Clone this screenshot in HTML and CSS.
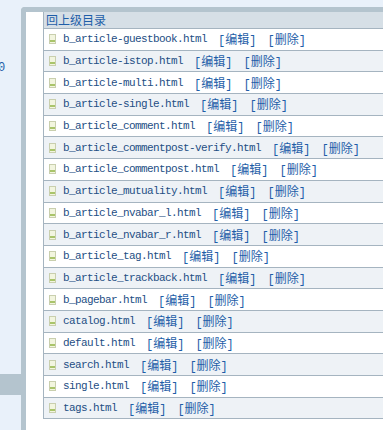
FILE: index.html
```html
<!DOCTYPE html>
<html lang="zh-CN">
<head>
	<meta charset="UTF-8">
	<title>模板文件</title>
	<link rel="stylesheet" href="styles.css">
</head>
<body>
	<div class="page">
		<div class="side">
			<div class="side-link">0</div>
			<div class="side-on"></div>
		</div>
		<div class="frame">
			<div class="list">
				<div class="head"><a href="#">回上级目录</a></div>
				<div class="row"><svg class="ico" width="7" height="10" viewBox="0 0 7 10"><rect x="0.5" y="0.5" width="6" height="9" fill="#f2f5df" stroke="#c9cfae"/><rect x="1" y="6" width="5" height="2" fill="#a9c46a"/></svg><span class="fn">b_article-guestbook.html</span><a href="#">[编辑]</a><a href="#">[删除]</a></div>
				<div class="row"><svg class="ico" width="7" height="10" viewBox="0 0 7 10"><rect x="0.5" y="0.5" width="6" height="9" fill="#f2f5df" stroke="#c9cfae"/><rect x="1" y="6" width="5" height="2" fill="#a9c46a"/></svg><span class="fn">b_article-istop.html</span><a href="#">[编辑]</a><a href="#">[删除]</a></div>
				<div class="row"><svg class="ico" width="7" height="10" viewBox="0 0 7 10"><rect x="0.5" y="0.5" width="6" height="9" fill="#f2f5df" stroke="#c9cfae"/><rect x="1" y="6" width="5" height="2" fill="#a9c46a"/></svg><span class="fn">b_article-multi.html</span><a href="#">[编辑]</a><a href="#">[删除]</a></div>
				<div class="row"><svg class="ico" width="7" height="10" viewBox="0 0 7 10"><rect x="0.5" y="0.5" width="6" height="9" fill="#f2f5df" stroke="#c9cfae"/><rect x="1" y="6" width="5" height="2" fill="#a9c46a"/></svg><span class="fn">b_article-single.html</span><a href="#">[编辑]</a><a href="#">[删除]</a></div>
				<div class="row"><svg class="ico" width="7" height="10" viewBox="0 0 7 10"><rect x="0.5" y="0.5" width="6" height="9" fill="#f2f5df" stroke="#c9cfae"/><rect x="1" y="6" width="5" height="2" fill="#a9c46a"/></svg><span class="fn">b_article_comment.html</span><a href="#">[编辑]</a><a href="#">[删除]</a></div>
				<div class="row"><svg class="ico" width="7" height="10" viewBox="0 0 7 10"><rect x="0.5" y="0.5" width="6" height="9" fill="#f2f5df" stroke="#c9cfae"/><rect x="1" y="6" width="5" height="2" fill="#a9c46a"/></svg><span class="fn">b_article_commentpost-verify.html</span><a href="#">[编辑]</a><a href="#">[删除]</a></div>
				<div class="row"><svg class="ico" width="7" height="10" viewBox="0 0 7 10"><rect x="0.5" y="0.5" width="6" height="9" fill="#f2f5df" stroke="#c9cfae"/><rect x="1" y="6" width="5" height="2" fill="#a9c46a"/></svg><span class="fn">b_article_commentpost.html</span><a href="#">[编辑]</a><a href="#">[删除]</a></div>
				<div class="row"><svg class="ico" width="7" height="10" viewBox="0 0 7 10"><rect x="0.5" y="0.5" width="6" height="9" fill="#f2f5df" stroke="#c9cfae"/><rect x="1" y="6" width="5" height="2" fill="#a9c46a"/></svg><span class="fn">b_article_mutuality.html</span><a href="#">[编辑]</a><a href="#">[删除]</a></div>
				<div class="row"><svg class="ico" width="7" height="10" viewBox="0 0 7 10"><rect x="0.5" y="0.5" width="6" height="9" fill="#f2f5df" stroke="#c9cfae"/><rect x="1" y="6" width="5" height="2" fill="#a9c46a"/></svg><span class="fn">b_article_nvabar_l.html</span><a href="#">[编辑]</a><a href="#">[删除]</a></div>
				<div class="row"><svg class="ico" width="7" height="10" viewBox="0 0 7 10"><rect x="0.5" y="0.5" width="6" height="9" fill="#f2f5df" stroke="#c9cfae"/><rect x="1" y="6" width="5" height="2" fill="#a9c46a"/></svg><span class="fn">b_article_nvabar_r.html</span><a href="#">[编辑]</a><a href="#">[删除]</a></div>
				<div class="row"><svg class="ico" width="7" height="10" viewBox="0 0 7 10"><rect x="0.5" y="0.5" width="6" height="9" fill="#f2f5df" stroke="#c9cfae"/><rect x="1" y="6" width="5" height="2" fill="#a9c46a"/></svg><span class="fn">b_article_tag.html</span><a href="#">[编辑]</a><a href="#">[删除]</a></div>
				<div class="row"><svg class="ico" width="7" height="10" viewBox="0 0 7 10"><rect x="0.5" y="0.5" width="6" height="9" fill="#f2f5df" stroke="#c9cfae"/><rect x="1" y="6" width="5" height="2" fill="#a9c46a"/></svg><span class="fn">b_article_trackback.html</span><a href="#">[编辑]</a><a href="#">[删除]</a></div>
				<div class="row"><svg class="ico" width="7" height="10" viewBox="0 0 7 10"><rect x="0.5" y="0.5" width="6" height="9" fill="#f2f5df" stroke="#c9cfae"/><rect x="1" y="6" width="5" height="2" fill="#a9c46a"/></svg><span class="fn">b_pagebar.html</span><a href="#">[编辑]</a><a href="#">[删除]</a></div>
				<div class="row"><svg class="ico" width="7" height="10" viewBox="0 0 7 10"><rect x="0.5" y="0.5" width="6" height="9" fill="#f2f5df" stroke="#c9cfae"/><rect x="1" y="6" width="5" height="2" fill="#a9c46a"/></svg><span class="fn">catalog.html</span><a href="#">[编辑]</a><a href="#">[删除]</a></div>
				<div class="row"><svg class="ico" width="7" height="10" viewBox="0 0 7 10"><rect x="0.5" y="0.5" width="6" height="9" fill="#f2f5df" stroke="#c9cfae"/><rect x="1" y="6" width="5" height="2" fill="#a9c46a"/></svg><span class="fn">default.html</span><a href="#">[编辑]</a><a href="#">[删除]</a></div>
				<div class="row"><svg class="ico" width="7" height="10" viewBox="0 0 7 10"><rect x="0.5" y="0.5" width="6" height="9" fill="#f2f5df" stroke="#c9cfae"/><rect x="1" y="6" width="5" height="2" fill="#a9c46a"/></svg><span class="fn">search.html</span><a href="#">[编辑]</a><a href="#">[删除]</a></div>
				<div class="row"><svg class="ico" width="7" height="10" viewBox="0 0 7 10"><rect x="0.5" y="0.5" width="6" height="9" fill="#f2f5df" stroke="#c9cfae"/><rect x="1" y="6" width="5" height="2" fill="#a9c46a"/></svg><span class="fn">single.html</span><a href="#">[编辑]</a><a href="#">[删除]</a></div>
				<div class="row"><svg class="ico" width="7" height="10" viewBox="0 0 7 10"><rect x="0.5" y="0.5" width="6" height="9" fill="#f2f5df" stroke="#c9cfae"/><rect x="1" y="6" width="5" height="2" fill="#a9c46a"/></svg><span class="fn">tags.html</span><a href="#">[编辑]</a><a href="#">[删除]</a></div>
			</div>
		</div>
	</div>
</body>
</html>
```
FILE: styles.css
```css
body{
	margin: 0;
	background: #e9f1fa;
	overflow: hidden;
	font-family: "Liberation Mono", "Noto Sans CJK SC", monospace;
}
a{
	color: #1e5ea8;
	text-decoration: none;
}
.page{
	display: flex;
	height: 430px;
}
.side{
	width: 21px;
	flex: none;
	overflow: hidden;
}
.side-link{
	margin-top: 61px;
	height: 14px;
	line-height: 14px;
	font-size: 12px;
	color: #1e5ea8;
	text-indent: -2px;
}
.side-on{
	margin-top: 299px;
	height: 21px;
	background: #b4c4ce;
}
.frame{
	flex: 1;
	min-width: 0;
	margin-top: 7px;
	border-top: 5px solid #b4c4ce;
	border-left: 5px solid #b4c4ce;
	border-top-left-radius: 4px;
	background: #fff;
	padding-left: 17px;
	overflow: hidden;
}
.list{
	width: 380px;
	border-left: 1px solid #a5b4c0;
}
.head{
	height: 16px;
	line-height: 16px;
	padding-left: 2px;
	background: #d6dfe6;
	border-bottom: 1px solid #a5b4c0;
	font-family: "Noto Sans CJK SC", sans-serif;
	font-size: 12px;
}
.row{
	display: flex;
	align-items: center;
	height: 20.7px;
	padding-left: 5px;
	border-bottom: 1px solid #a5b4c0;
	white-space: nowrap;
}
.row:nth-child(odd){
	background: #eef2f6;
}
.ico{
	flex: none;
	margin-right: 7px;
}
.fn{
	font-size: 11px;
	letter-spacing: -0.6px;
	color: #234e84;
}
.row a{
	margin-left: 11px;
	font-size: 12px;
}
```
